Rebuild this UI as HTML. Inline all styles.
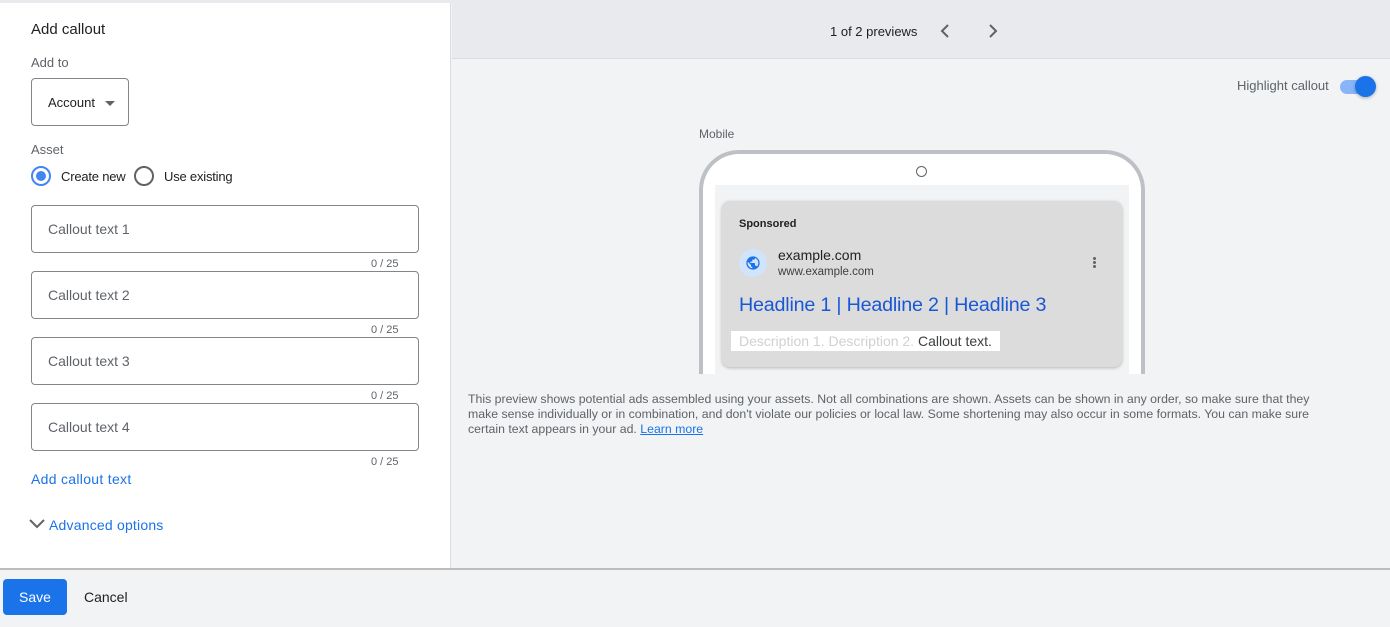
<!DOCTYPE html>
<html><head><meta charset="utf-8"><style>
*{box-sizing:border-box;margin:0;padding:0}
body{width:1390px;height:627px;position:relative;overflow:hidden;background:#f1f3f4;font-family:"Liberation Sans",Arial,sans-serif;color:#202124}
.a{position:absolute}
.left{left:0;top:3px;width:451px;height:566px;background:#fff;border-right:1px solid #dadce0}
.inp{left:31px;width:388px;height:48px;border:1px solid #80868b;border-radius:4px;font-size:14px;color:#5f6368;padding:15px 0 0 16px}
.cnt{left:371px;font-size:11px;color:#5f6368}
.lbl{font-size:13px;color:#5f6368}
</style></head><body>
<div class="a" style="left:0;top:0;width:1390px;height:3px;background:#e8eaed"></div>
<div class="a left"></div>
<div class="a" style="left:31px;top:21px;font-size:15px">Add callout</div>
<div class="a lbl" style="left:31px;top:55px">Add to</div>
<div class="a" style="left:31px;top:78px;width:98px;height:48px;border:1px solid #80868b;border-radius:4px;font-size:13px;padding:16px 0 0 16px">Account <span style="display:inline-block;width:0;height:0;border-left:5px solid transparent;border-right:5px solid transparent;border-top:5px solid #5f6368;margin-left:6px;vertical-align:middle"></span></div>
<div class="a lbl" style="left:31px;top:142px">Asset</div>
<div class="a" style="left:31px;top:166px;width:20px;height:20px;border:2px solid #4285f4;border-radius:50%"><div style="margin:3px;width:10px;height:10px;background:#4285f4;border-radius:50%"></div></div>
<div class="a" style="left:61px;top:169px;font-size:13px;letter-spacing:-0.2px">Create new</div>
<div class="a" style="left:134px;top:166px;width:20px;height:20px;border:2px solid #5f6368;border-radius:50%"></div>
<div class="a" style="left:164px;top:169px;font-size:13px;letter-spacing:-0.2px">Use existing</div>
<div class="a inp" style="top:205px">Callout text 1</div><div class="a cnt" style="top:258px">0 / 25</div>
<div class="a inp" style="top:271px">Callout text 2</div><div class="a cnt" style="top:324px">0 / 25</div>
<div class="a inp" style="top:337px">Callout text 3</div><div class="a cnt" style="top:390px">0 / 25</div>
<div class="a inp" style="top:403px">Callout text 4</div><div class="a cnt" style="top:456px">0 / 25</div>
<div class="a" style="left:31px;top:471px;font-size:14px;color:#1a73e8;letter-spacing:0.3px">Add callout text</div>
<svg class="a" style="left:29px;top:518px" width="16" height="12"><path d="M1 2l7 7 7-7" fill="none" stroke="#5f6368" stroke-width="2"/></svg>
<div class="a" style="left:49px;top:517px;font-size:14px;color:#1a73e8;letter-spacing:0.2px">Advanced options</div>
<div class="a" style="left:452px;top:3px;width:938px;height:56px;background:#e8eaed;border-bottom:1px solid #dadce0"></div>
<div class="a" style="left:830px;top:24px;font-size:13px">1 of 2 previews</div>
<svg class="a" style="left:938px;top:23px" width="14" height="16"><path d="M10 2L4 8l6 6" fill="none" stroke="#5f6368" stroke-width="2"/></svg>
<svg class="a" style="left:986px;top:23px" width="14" height="16"><path d="M4 2l6 6-6 6" fill="none" stroke="#5f6368" stroke-width="2"/></svg>
<div class="a" style="left:1237px;top:78px;font-size:13px;color:#5f6368">Highlight callout</div>
<div class="a" style="left:1340px;top:80px;width:34px;height:14px;border-radius:7px;background:#8ab4f8"></div>
<div class="a" style="left:1355px;top:76px;width:21px;height:21px;border-radius:50%;background:#1a73e8;box-shadow:0 1px 3px rgba(0,0,0,.3)"></div>
<div class="a" style="left:699px;top:127px;font-size:12px;color:#5f6368">Mobile</div>
<div class="a" style="left:699px;top:150px;width:446px;height:224px;border:4px solid #bdc1c6;border-bottom:none;border-radius:40px 40px 0 0;background:#fff"></div>
<div class="a" style="left:916px;top:166px;width:11px;height:11px;border:1px solid #5f6368;border-radius:50%"></div>
<div class="a" style="left:715px;top:185px;width:414px;height:189px;background:#f1f3f4"></div>
<div class="a" style="left:722px;top:201px;width:400px;height:166px;background:#dcdcdc;border-radius:8px;box-shadow:0 1px 3px rgba(0,0,0,.25)"></div>
<div class="a" style="left:739px;top:218px;font-size:11px;font-weight:bold">Sponsored</div>
<div class="a" style="left:739px;top:249px;width:28px;height:28px;border-radius:50%;background:#d2e3fc"></div>
<svg class="a" style="left:745px;top:255px" width="16" height="16" viewBox="0 0 24 24"><path fill="#1a73e8" d="M12 2C6.48 2 2 6.48 2 12s4.48 10 10 10 10-4.48 10-10S17.52 2 12 2zm-1 17.93c-3.95-.49-7-3.85-7-7.93 0-.62.08-1.21.21-1.790L9 15v1c0 1.1.9 2 2 2v1.93zm6.9-2.54c-.26-.81-1-1.39-1.9-1.39h-1v-3c0-.55-.45-1-1-1H8v-2h2c.55 0 1-.45 1-1V7h2c1.1 0 2-.9 2-2v-.41c2.93 1.19 5 4.06 5 7.41 0 2.08-.8 3.97-2.1 5.39z"/></svg>
<div class="a" style="left:778px;top:247px;font-size:14px">example.com</div>
<div class="a" style="left:778px;top:266px;font-size:11.5px;color:#3c4043">www.example.com</div>
<div class="a" style="left:1093px;top:257px;width:3px;height:3px;border-radius:50%;background:#5f6368;box-shadow:0 4px 0 #5f6368,0 8px 0 #5f6368"></div>
<div class="a" style="left:739px;top:294px;font-size:19.7px;color:#1a57d6;letter-spacing:-0.2px">Headline 1 | Headline 2 | Headline 3</div>
<div class="a" style="left:731px;top:331px;width:269px;height:20px;background:#fff;font-size:14px;padding:2px 0 0 8px;white-space:nowrap"><span style="color:#d0d0d0">Description 1. Description 2.</span> <span style="color:#3c4043">Callout text.</span></div>
<div class="a" style="left:468px;top:392px;width:846px;font-size:12.3px;line-height:15px;color:#5f6368">This preview shows potential ads assembled using your assets. Not all combinations are shown. Assets can be shown in any order, so make sure that they make sense individually or in combination, and don't violate our policies or local law. Some shortening may also occur in some formats. You can make sure certain text appears in your ad. <span style="color:#1a73e8;text-decoration:underline">Learn more</span></div>
<div class="a" style="left:0;top:568px;width:1390px;height:2px;background:#bdbdbd"></div>
<div class="a" style="left:3px;top:579px;width:64px;height:36px;background:#1a73e8;border-radius:4px;color:#fff;font-size:14px;text-align:center;line-height:36px">Save</div>
<div class="a" style="left:84px;top:589px;font-size:14px">Cancel</div>
</body></html>
